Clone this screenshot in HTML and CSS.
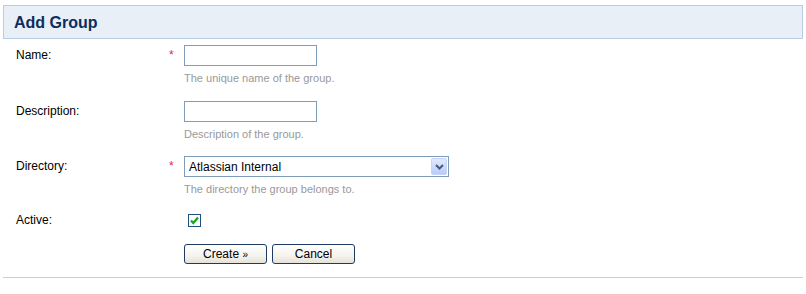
FILE: index.html
```html
<!DOCTYPE html>
<html>
<head>
<meta charset="utf-8">
<title>Add Group</title>
<link rel="stylesheet" href="styles.css">
</head>
<body>
<div class="page">
  <div class="header"><h1 class="title">Add Group</h1></div>
  <form class="form">
    <div class="row">
      <label class="label" for="name">Name:</label>
      <span class="req">*</span>
      <div class="field">
        <input id="name" class="text" type="text">
        <div class="help">The unique name of the group.</div>
      </div>
    </div>
    <div class="row row-desc">
      <label class="label" for="desc">Description:</label>
      <span class="req"></span>
      <div class="field">
        <input id="desc" class="text" type="text">
        <div class="help">Description of the group.</div>
      </div>
    </div>
    <div class="row">
      <label class="label" for="dir">Directory:</label>
      <span class="req">*</span>
      <div class="field">
        <div class="select-wrap">
          <select id="dir" class="select"><option>Atlassian Internal</option></select>
          <span class="select-btn"><svg width="9" height="6" viewBox="0 0 9 6"><path d="M1 1 L4.5 4.5 L8 1" fill="none" stroke="#4a5a7e" stroke-width="2"/></svg></span>
        </div>
        <div class="help">The directory the group belongs to.</div>
      </div>
    </div>
    <div class="row row-active">
      <label class="label">Active:</label>
      <span class="req"></span>
      <div class="field">
        <span class="check"><svg width="11" height="11" viewBox="0 0 11 11"><path d="M2 5.5 L4.3 8 L9 2.5" fill="none" stroke="#21a121" stroke-width="2.2"/></svg></span>
      </div>
    </div>
    <div class="row row-buttons">
      <span></span><span></span>
      <div class="buttons">
        <button type="button" class="btn btn-create">Create <span class="raquo">&raquo;</span></button>
        <button type="button" class="btn btn-cancel">Cancel</button>
      </div>
    </div>
  </form>
  <div class="rule"></div>
</div>
</body>
</html>
```

FILE: styles.css
```css
html, body {
  margin: 0;
  padding: 0;
  background: #ffffff;
}
body {
  font-family: "Liberation Sans", Arial, sans-serif;
  font-size: 12px;
  color: #000;
}
.page {
  width: 800px;
  padding: 5px 3px 0 3px;
}
.header {
  height: 32px;
  border: 1px solid #b9cde5;
  background: #e9eff7;
  display: flex;
  align-items: center;
  padding-left: 10px;
}
.title {
  margin: 0;
  font-size: 16px;
  font-weight: bold;
  color: #0c2d5e;
  line-height: 20px;
  position: relative;
  top: 1px;
}
.form {
  margin: 6px 0 0 0;
}
.row {
  display: grid;
  grid-template-columns: 152px 16px 1fr;
  padding-left: 13px;
  margin-bottom: 16px;
}
.row-desc {
  margin-bottom: 15px;
}
.label {
  line-height: 21px;
  height: 21px;
}
.req {
  color: #e0206a;
  line-height: 21px;
  font-size: 12px;
  padding-left: 1px;
}
.field {
  display: flex;
  flex-direction: column;
  align-items: flex-start;
}
.text {
  box-sizing: border-box;
  width: 133px;
  height: 21px;
  border: 1px solid #7f9db9;
  margin: 0;
  padding: 1px 3px;
  font-family: "Liberation Sans", Arial, sans-serif;
  font-size: 12px;
}
.help {
  margin-top: 5px;
  font-size: 11px;
  line-height: 14px;
  color: #999;
}
.select-wrap {
  position: relative;
  width: 265px;
  height: 21px;
}
.select {
  appearance: none;
  -webkit-appearance: none;
  box-sizing: border-box;
  width: 265px;
  height: 21px;
  border: 1px solid #7f9db9;
  border-radius: 0;
  background: #fff;
  margin: 0;
  padding: 0 0 0 4px;
  font-family: "Liberation Sans", Arial, sans-serif;
  font-size: 12px;
  color: #000;
}
.select-btn {
  position: absolute;
  right: 2px;
  top: 2px;
  box-sizing: border-box;
  width: 16px;
  height: 17px;
  border: 1px solid #c3d3fd;
  border-radius: 2px;
  background: linear-gradient(#e1e9fe, #b9ccf7);
  display: flex;
  align-items: center;
  justify-content: center;
}
.row-active {
  margin-top: -2px;
  margin-bottom: 13px;
}
.check {
  box-sizing: border-box;
  width: 13px;
  height: 13px;
  border: 1px solid #1c5180;
  background: #fff;
  margin: 4px 0 0 4px;
  display: flex;
  align-items: center;
  justify-content: center;
}
.row-buttons {
  margin-bottom: 0;
}
.buttons {
  display: flex;
  gap: 5px;
}
.btn {
  box-sizing: border-box;
  height: 20px;
  border: 1px solid #1c3a62;
  border-radius: 3px;
  background: linear-gradient(#ffffff, #f4f3ee 60%, #e4e2d8);
  font-family: "Liberation Sans", Arial, sans-serif;
  font-size: 12px;
  color: #000;
  padding: 0;
  line-height: 17px;
}
.btn-create {
  width: 83px;
}
.btn-cancel {
  width: 83px;
}
.raquo {
  font-size: 10px;
}
.rule {
  margin-top: 13px;
  height: 1px;
  background: #c5cedd;
}
```
